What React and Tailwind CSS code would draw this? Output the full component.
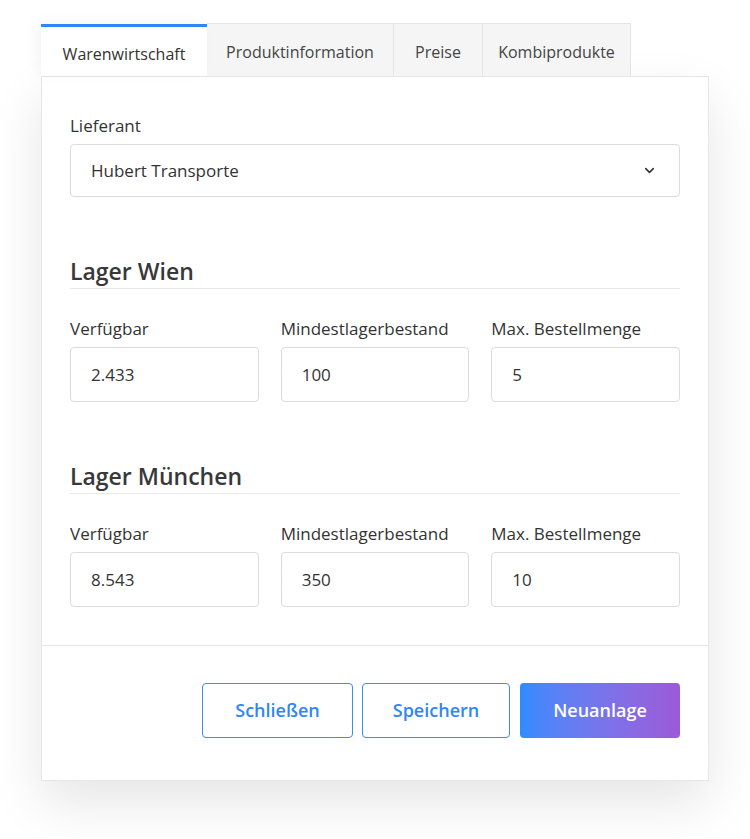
import { ChevronDown } from "lucide-react"

const tabs = ["Warenwirtschaft", "Produktinformation", "Preise", "Kombiprodukte"]

const lager = [
  { name: "Lager Wien", values: ["2.433", "100", "5"] },
  { name: "Lager München", values: ["8.543", "350", "10"] },
]

const fields = ["Verfügbar", "Mindestlagerbestand", "Max. Bestellmenge"]

function Field({ label, value }) {
  return (
    <div className="flex flex-col">
      <label className="text-[17px] leading-[24px] text-[#333] mb-[6px]">{label}</label>
      <div className="h-[55px] border border-[#dcdcdc] rounded-[4px] flex items-center px-[20px] text-[17px] text-[#333]">
        {value}
      </div>
    </div>
  )
}

export default function App() {
  return (
    <div className="min-h-screen bg-white pt-[23px] pl-[41px] font-['Open_Sans',sans-serif]">
      <div className="w-[668px]">
        <div className="flex h-[53px] items-end">
          {tabs.map((tab, i) =>
            i === 0 ? (
              <div
                key={tab}
                className="w-[166px] h-[52px] bg-white border-t-[3px] border-[#2f86f6] flex items-center justify-center text-[16px] text-[#333] pt-[4px] relative z-10 shadow-[-6px_-2px_12px_rgba(0,0,0,0.04)]"
              >
                {tab}
              </div>
            ) : (
              <div
                key={tab}
                className={`h-[53px] bg-[#f5f5f5] border border-l-0 border-b-0 border-[#e4e4e4] flex items-center justify-center text-[16px] text-[#444] pt-[4px] ${
                  i === 1 ? "w-[187px]" : i === 2 ? "w-[89px]" : "w-[148px]"
                }`}
              >
                {tab}
              </div>
            )
          )}
        </div>

        <div className="bg-white border border-[#e6e6e6] shadow-[0_22px_50px_rgba(0,0,0,0.10)]">
          <div className="px-[28px] pt-[37px] pb-[38px]">
            <label className="block text-[17px] leading-[24px] text-[#333] mb-[6px]">Lieferant</label>
            <div className="h-[53px] border border-[#dcdcdc] rounded-[4px] flex items-center justify-between pl-[20px] pr-[22px] text-[17px] text-[#333]">
              <span>Hubert Transporte</span>
              <ChevronDown className="w-[15px] h-[15px] text-[#333]" strokeWidth={2.5} />
            </div>

            {lager.map((l) => (
              <div key={l.name} className="mt-[59px]">
                <h2 className="text-[23px] leading-[30px] font-semibold text-[#383838] pb-[2px] border-b border-[#e8e8e8]">
                  {l.name}
                </h2>
                <div className="grid grid-cols-3 gap-x-[22px] mt-[28px]">
                  {fields.map((f, i) => (
                    <Field key={f} label={f} value={l.values[i]} />
                  ))}
                </div>
              </div>
            ))}
          </div>

          <div className="border-t border-[#e6e6e6] flex justify-end gap-[9px] pt-[37px] pb-[42px] pr-[28px]">
            <button className="w-[151px] h-[55px] border-[1.5px] border-[#3a8cf7] rounded-[4px] text-[#2f86f6] text-[18px] font-semibold">
              Schließen
            </button>
            <button className="w-[148px] h-[55px] border-[1.5px] border-[#3a8cf7] rounded-[4px] text-[#2f86f6] text-[18px] font-semibold">
              Speichern
            </button>
            <button className="w-[160px] h-[55px] ml-[1px] rounded-[4px] text-white text-[18px] font-semibold bg-gradient-to-r from-[#2d8bff] to-[#9c59d8]">
              Neuanlage
            </button>
          </div>
        </div>
      </div>
    </div>
  )
}
